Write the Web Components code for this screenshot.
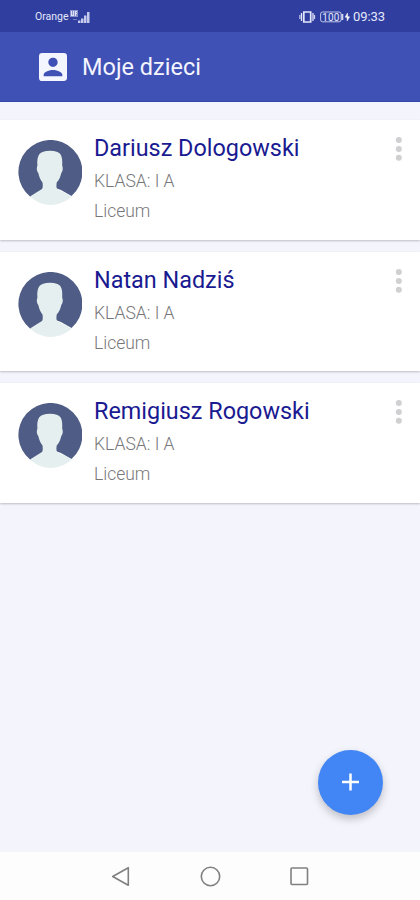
<!DOCTYPE html>
<html lang="pl">
<head>
<meta charset="utf-8">
<title>Moje dzieci</title>
<style>
html, body { margin: 0; height: 100%; }
body { font-family: Roboto, "Liberation Sans", sans-serif; background: #f3f4fc; overflow: hidden; }
</style>
</head>
<body>
<children-screen></children-screen>
<script>
function define(name, markup) {
  const template = document.createElement('template');
  template.innerHTML = markup;
  customElements.define(name, class extends HTMLElement {
    constructor() {
      super();
      this.attachShadow({ mode: 'open' }).append(template.content.cloneNode(true));
    }
  });
}

define('status-bar', `
<style>
:host { display: flex; align-items: center; height: 32px; box-sizing: border-box; padding: 1px 34px 0 35px; background: #303f9f; color: #e4e7fb; }
.carrier { font-size: 10.5px; line-height: 14px; width: 34px; white-space: nowrap; }
.time { font-size: 13px; line-height: 16px; width: 33px; white-space: nowrap; letter-spacing: -.1px; }
.fill { flex: 1; }
svg { display: block; flex: none; }
.batt { margin: 0 1px 0 4px; }
</style>
<span class="carrier">Orange</span>
<svg width="21" height="14" viewBox="0 0 21 14" fill="#dfe3fa">
  <path d="M1 0h8v7H1z" opacity=".5"/><path d="M2 1h1v4h1V1h1v5H2zM6 1h2v1H7v1h1v1H7v2H6z"/><path d="M4 9h4v1H4z" opacity=".4"/>
  <path d="M9 10.500h2.500V13H9zM12 8.500h2.500V13H12zM15 5.500h2.500V13H15zM18 2h2.500v11H18z" opacity=".85"/>
</svg>
<span class="fill"></span>
<svg width="17" height="14" viewBox="0 0 17 14" fill="none" stroke="#e4e7fb"><path d="M4.800 2h6.900v10H4.800z" stroke-width="1.700"/><path d="M2.500 3v8M14 3v8" stroke-width="1.300"/><path d="M.9 5v4M15.600 5v4"/></svg>
<svg class="batt" width="32" height="12" viewBox="0 0 32 12"><rect x=".6" y="1" width="20.500" height="9.800" rx="2" fill="none" stroke="#cfd5f4" stroke-width=".9"/><path d="M22.300 3v6" stroke="#cfd5f4" stroke-width="2"/><text x="10.800" y="9.500" text-anchor="middle" font-size="10" fill="#e4e7fb" textLength="17">100</text><path d="M27.500 2l-2.300 4.200h1.900V10l2.500-4.200h-1.900z" fill="#fff" stroke="#fff" stroke-width=".5"/></svg>
<span class="time">09:33</span>`);

define('app-bar', `
<style>
:host { display: flex; align-items: center; height: 70px; box-sizing: border-box; padding: 0 39px; gap: 15px; background: #3f51b5; color: #f3f4fe; border-bottom: 1px solid #3546aa; }
svg { display: block; flex: none; }
h1 { margin: 0; font-weight: 400; font-size: 23.500px; line-height: 28px; white-space: nowrap; }
</style>
<svg width="28" height="28" viewBox="3 3 18 18" fill="#f3f5ff"><path d="M3 5v14a2 2 0 0 0 2 2h14c1.100 0 2-.9 2-2V5a2 2 0 0 0-2-2H5a2 2 0 0 0-2 2zm12 4c0 1.660-1.340 3-3 3s-3-1.340-3-3 1.340-3 3-3 3 1.340 3 3zm-9 8c0-2 4-3.100 6-3.100s6 1.100 6 3.100v1H6v-1z"/></svg>
<h1><slot></slot></h1>`);

define('person-avatar', `
<style>:host { display: block; width: 64px; height: 66px; flex: none; } svg { display: block; }</style>
<svg width="64" height="66" viewBox="0 0 64 66">
  <path d="M12.500 57A32 32 0 1 1 53.500 56L43 50 32 46z" fill="#4f5d86"/>
  <path d="M12 56.500C17 53 21 51 24 49c1-1 .9-4 .5-6.500-2-2.500-3.500-6-4.200-9.500-1.500-2-2-4.500-.9-7.500-.6-10 1.500-14.700 12.600-14.700S44.800 15.500 44.200 25.500c1.200 3 .5 5.500-.9 7.500-.7 3.500-2.200 7-4.600 9.500-.4 2.500-.5 5.500.5 6.500 3 2 9.800 4.300 14.600 7.500C49 61 40.500 65 32.500 65S17 61 12 56.500z" fill="#e6efef"/>
</svg>`);

define('more-button', `
<style>:host { display: block; flex: none; } svg { display: block; }</style>
<svg width="8" height="26" viewBox="0 0 8 26" fill="#d0d0d2"><circle cx="3.800" cy="4" r="3"/><circle cx="3.800" cy="13" r="3"/><circle cx="3.800" cy="21.800" r="3"/></svg>`);

define('child-card', `
<style>
:host { display: flex; box-sizing: border-box; height: 119.500px; padding: 0 17px 0 18px; background: #fff; box-shadow: 0 1px 2px rgba(0,0,0,.22); }
person-avatar { margin-top: 20px; }
.text { flex: 1; padding: 13px 0 0 12px; white-space: nowrap; color: #77777a; font-size: 17.500px; font-weight: 300; line-height: 30px; }
.name { color: #1a1a91; font-size: 23.400px; font-weight: 400; line-height: 30px; margin-bottom: 3.400px; }
more-button { margin-top: 16px; }
</style>
<person-avatar></person-avatar>
<div class="text"><div class="name"><slot name="name"></slot></div><div><slot name="grade"></slot></div><div><slot name="school"></slot></div></div>
<more-button></more-button>`);

define('add-button', `
<style>
:host { display: grid; place-items: center; width: 65px; height: 65px; border-radius: 50%; background: #4285f4; box-shadow: 0 4px 8px rgba(0,0,0,.22); }
svg { display: block; }
</style>
<svg width="18" height="18" viewBox="0 0 18 18"><path d="M8.500 .5v17M0 9h17" stroke="#fff" stroke-width="2.500"/></svg>`);

define('nav-bar', `
<style>
:host { display: flex; height: 48px; box-sizing: border-box; padding: 14px 110px 0; justify-content: space-between; background: #fdfdfd; }
svg { display: block; }
</style>
<svg width="22" height="22" viewBox="0 0 22 22" fill="none" stroke="#808080" stroke-width="1.600" stroke-linejoin="round"><path d="M18.300 1.700v17.600L2.700 10.500z"/></svg>
<svg width="22" height="22" viewBox="0 0 22 22" fill="none" stroke="#808080" stroke-width="1.600"><circle cx="11.500" cy="10.500" r="9.200"/></svg>
<svg width="22" height="22" viewBox="0 0 22 22" fill="none" stroke="#808080" stroke-width="1.600"><rect x="3" y="2" width="16.500" height="16.500" rx="1"/></svg>`);

define('children-screen', `
<style>
:host { display: flex; flex-direction: column; width: 420px; height: 900px; background: #f3f4fc; position: relative; }
main { flex: 1; display: flex; flex-direction: column; gap: 12px; padding-top: 18px; }
add-button { position: absolute; left: 318px; top: 749.500px; }
</style>
<status-bar></status-bar>
<app-bar>Moje dzieci</app-bar>
<main>
  <child-card><span slot="name">Dariusz Dologowski</span><span slot="grade">KLASA: I A</span><span slot="school">Liceum</span></child-card>
  <child-card><span slot="name">Natan Nadziś</span><span slot="grade">KLASA: I A</span><span slot="school">Liceum</span></child-card>
  <child-card><span slot="name">Remigiusz Rogowski</span><span slot="grade">KLASA: I A</span><span slot="school">Liceum</span></child-card>
</main>
<add-button></add-button>
<nav-bar></nav-bar>`);
</script>
</body>
</html>
